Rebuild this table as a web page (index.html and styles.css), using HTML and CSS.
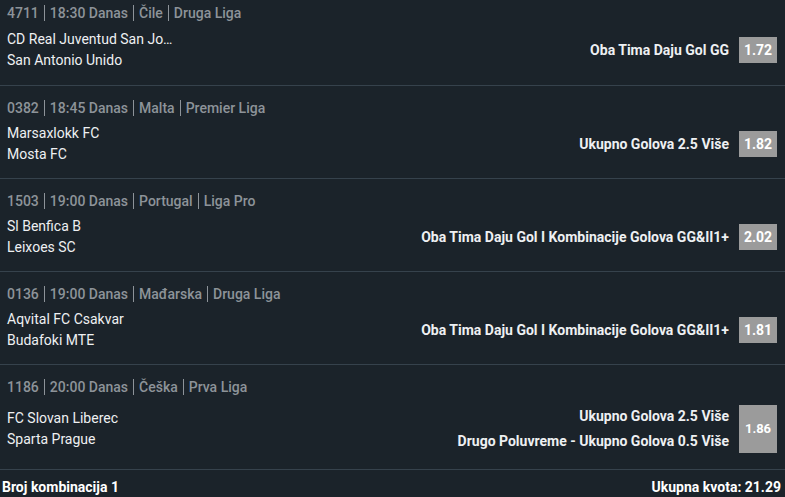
FILE: index.html
```html
<!DOCTYPE html>
<html lang="sr">

<head>
    <meta charset="UTF-8">
    <meta name="viewport" content="width=device-width, initial-scale=1.0">
    <title>Tiket</title>
    <link rel="stylesheet" href="styles.css">
</head>

<body>
    <div class="ticket">
        <div class="event first">
            <div class="event-info">
                <span>4711</span><span>18:30 Danas</span><span>Čile</span><span>Druga Liga</span>
            </div>
            <div class="event-body">
                <div class="teams">
                    <div class="team">CD Real Juventud San Jo…</div>
                    <div class="team">San Antonio Unido</div>
                </div>
                <div class="picks">
                    <div class="markets">
                        <div class="market">Oba Tima Daju Gol GG</div>
                    </div>
                    <div class="odd">1.72</div>
                </div>
            </div>
        </div>

        <div class="event">
            <div class="event-info">
                <span>0382</span><span>18:45 Danas</span><span>Malta</span><span>Premier Liga</span>
            </div>
            <div class="event-body">
                <div class="teams">
                    <div class="team">Marsaxlokk FC</div>
                    <div class="team">Mosta FC</div>
                </div>
                <div class="picks">
                    <div class="markets">
                        <div class="market">Ukupno Golova 2.5 Više</div>
                    </div>
                    <div class="odd">1.82</div>
                </div>
            </div>
        </div>

        <div class="event">
            <div class="event-info">
                <span>1503</span><span>19:00 Danas</span><span>Portugal</span><span>Liga Pro</span>
            </div>
            <div class="event-body">
                <div class="teams">
                    <div class="team">Sl Benfica B</div>
                    <div class="team">Leixoes SC</div>
                </div>
                <div class="picks">
                    <div class="markets">
                        <div class="market">Oba Tima Daju Gol I Kombinacije Golova GG&amp;II1+</div>
                    </div>
                    <div class="odd">2.02</div>
                </div>
            </div>
        </div>

        <div class="event">
            <div class="event-info">
                <span>0136</span><span>19:00 Danas</span><span>Mađarska</span><span>Druga Liga</span>
            </div>
            <div class="event-body">
                <div class="teams">
                    <div class="team">Aqvital FC Csakvar</div>
                    <div class="team">Budafoki MTE</div>
                </div>
                <div class="picks">
                    <div class="markets">
                        <div class="market">Oba Tima Daju Gol I Kombinacije Golova GG&amp;II1+</div>
                    </div>
                    <div class="odd">1.81</div>
                </div>
            </div>
        </div>

        <div class="event">
            <div class="event-info">
                <span>1186</span><span>20:00 Danas</span><span>Češka</span><span>Prva Liga</span>
            </div>
            <div class="event-body">
                <div class="teams">
                    <div class="team">FC Slovan Liberec</div>
                    <div class="team">Sparta Prague</div>
                </div>
                <div class="picks">
                    <div class="markets multi">
                        <div class="market">Ukupno Golova 2.5 Više</div>
                        <div class="market">Drugo Poluvreme - Ukupno Golova 0.5 Više</div>
                    </div>
                    <div class="odd tall">1.86</div>
                </div>
            </div>
        </div>

        <div class="ticket-footer">
            <span>Broj kombinacija 1</span>
            <span>Ukupna kvota: 21.29</span>
        </div>
    </div>
</body>

</html>
```

FILE: styles.css
```css
body {
    font-family: Roboto, 'Liberation Sans', sans-serif;
    background-color: #1b232a;
    color: #eef0f2;
    margin: 0;
    padding: 0;
    font-size: 14px;
    overflow: hidden;
}

.event {
    padding: 13px 8px 13px 7px;
    border-bottom: 1px solid #36424c;
}

/* first row is scrolled a little out of view */
.event.first {
    padding-top: 4px;
    padding-bottom: 14px;
}

.event.first .event-body {
    margin-top: 7px;
}

.event-info {
    display: flex;
    align-items: center;
    line-height: 18px;
    color: #8d9399;
    font-weight: 500;
}

/* thin divider between info items */
.event-info span + span {
    border-left: 1px solid #8d9399;
    margin-left: 5px;
    padding-left: 5px;
    line-height: 16px;
}

.event-body {
    display: flex;
    justify-content: space-between;
    align-items: center;
    margin-top: 6px;
}

.team {
    line-height: 21px;
    white-space: nowrap;
}

.picks {
    display: flex;
    align-items: center;
}

.markets {
    text-align: right;
    font-weight: 700;
    margin-right: 10px;
}

.market {
    line-height: 21px;
}

.markets.multi .market {
    line-height: 25px;
}

.odd {
    width: 38px;
    height: 26px;
    line-height: 26px;
    background-color: #9b9b9b;
    color: #fff;
    font-weight: 700;
    text-align: center;
}

.odd.tall {
    height: 48px;
    line-height: 48px;
    margin: 3px 0;
    font-size: 13px;
}

.ticket-footer {
    display: flex;
    justify-content: space-between;
    padding: 7px 4px 0 2px;
    line-height: 20px;
    font-weight: 700;
    color: #fff;
}
```
